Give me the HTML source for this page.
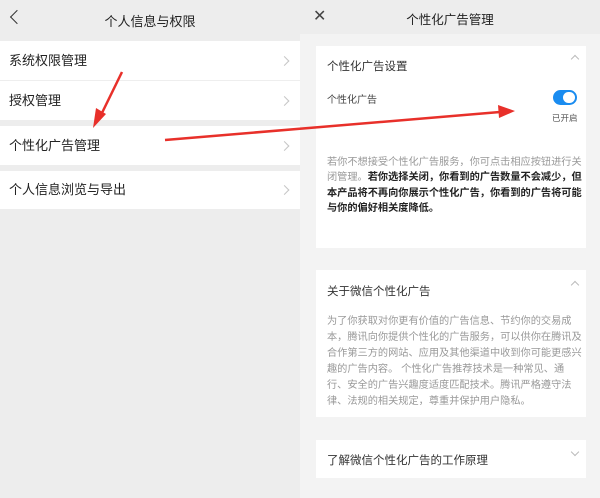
<!DOCTYPE html>
<html><head><meta charset="utf-8"><style>
*{margin:0;padding:0;box-sizing:border-box}
body{width:600px;height:498px;overflow:hidden;background:#ededed;font-family:"Liberation Sans","Noto Sans CJK SC",sans-serif;position:relative}
.a{position:absolute}
.row{position:absolute;left:0;width:300px;background:#fff;font-size:13px;color:#222;padding-left:9px}
.chev{position:absolute;right:12px;top:50%;width:7px;height:7px;border-right:1px solid #c5c5c5;border-top:1px solid #c5c5c5;transform:translateY(-50%) rotate(45deg)}
.card{position:absolute;left:316px;width:270px;background:#fff}
.t{font-size:11.5px;color:#333}
.p{font-size:10.2px;line-height:15.3px;color:#999;white-space:nowrap}
</style></head><body>
<div class="a" style="left:0;top:0;width:300px;height:41px;background:#ededed"></div>
<div class="a" style="left:12px;top:12px;width:10px;height:10px;border-left:1.5px solid #333;border-bottom:1.5px solid #333;transform:rotate(45deg)"></div>
<div class="a" style="left:0;width:300px;top:11px;text-align:center;font-size:13px;color:#222">个人信息与权限</div>
<div class="row" style="top:41px;height:39px;line-height:39px">系统权限管理<span class="chev"></span></div>
<div class="a" style="left:9px;top:80px;width:291px;height:1px;background:#eee"></div>
<div class="row" style="top:81px;height:39px;line-height:39px">授权管理<span class="chev"></span></div>
<div class="row" style="top:126px;height:39px;line-height:39px">个性化广告管理<span class="chev"></span></div>
<div class="row" style="top:171px;height:38px;line-height:38px">个人信息浏览与导出<span class="chev"></span></div>

<div class="a" style="left:300px;top:0;width:300px;height:34px;background:#ededed"></div>
<div class="a" style="left:313px;top:10px;font-size:16px;color:#444;line-height:14px">✕</div>
<div class="a" style="left:300px;width:300px;top:9px;text-align:center;font-size:12.5px;color:#222">个性化广告管理</div>
<div class="a" style="left:300px;top:34px;width:300px;height:464px;background:#f3f3f3"></div>

<div class="card" style="top:46px;height:202px">
<div class="a t" style="left:11px;top:12px">个性化广告设置</div>
<div class="a" style="left:256px;top:10px;width:6px;height:6px;border-left:1px solid #bbb;border-top:1px solid #bbb;transform:rotate(45deg)"></div>
<div class="a" style="left:11px;top:45px;font-size:10px;color:#444">个性化广告</div>
<div class="a" style="left:237px;top:44px;width:24px;height:15px;border-radius:8px;background:#1a8cf0"></div>
<div class="a" style="left:247px;top:46px;width:12px;height:11px;border-radius:6px;background:#fff"></div>
<div class="a" style="left:236px;top:66px;font-size:8.5px;color:#555">已开启</div>
<div class="a p" style="left:11px;top:109px">若你不想接受个性化广告服务，你可点击相应按钮进行关<br>闭管理。<b style="color:#222">若你选择关闭，你看到的广告数量不会减少，但<br>本产品将不再向你展示个性化广告，你看到的广告将可能<br>与你的偏好相关度降低。</b></div>
</div>

<div class="card" style="top:270px;height:147px">
<div class="a t" style="left:11px;top:13px">关于微信个性化广告</div>
<div class="a" style="left:256px;top:12px;width:6px;height:6px;border-left:1px solid #bbb;border-top:1px solid #bbb;transform:rotate(45deg)"></div>
<div class="a p" style="left:11px;top:44px;line-height:16px">为了你获取对你更有价值的广告信息、节约你的交易成<br>本，腾讯向你提供个性化的广告服务，可以供你在腾讯及<br>合作第三方的网站、应用及其他渠道中收到你可能更感兴<br>趣的广告内容。 个性化广告推荐技术是一种常见、通<br>行、安全的广告兴趣度适度匹配技术。腾讯严格遵守法<br>律、法规的相关规定，尊重并保护用户隐私。</div>
</div>

<div class="card" style="top:440px;height:38px">
<div class="a t" style="left:11px;top:12px;color:#333">了解微信个性化广告的工作原理</div>
<div class="a" style="left:256px;top:9px;width:6px;height:6px;border-right:1px solid #bbb;border-bottom:1px solid #bbb;transform:rotate(45deg)"></div>
</div>

<svg class="a" style="left:0;top:0" width="600" height="498">
<path d="M122 72 L100 117" stroke="#e8302a" stroke-width="2.5" fill="none"/>
<path d="M93 128 L96 108 L106 114 Z" fill="#e8302a"/>
<path d="M165 140 L500 112" stroke="#e8302a" stroke-width="2.5" fill="none"/>
<path d="M515 111 L498 105 L499 118 Z" fill="#e8302a"/>
</svg>
</body></html>
